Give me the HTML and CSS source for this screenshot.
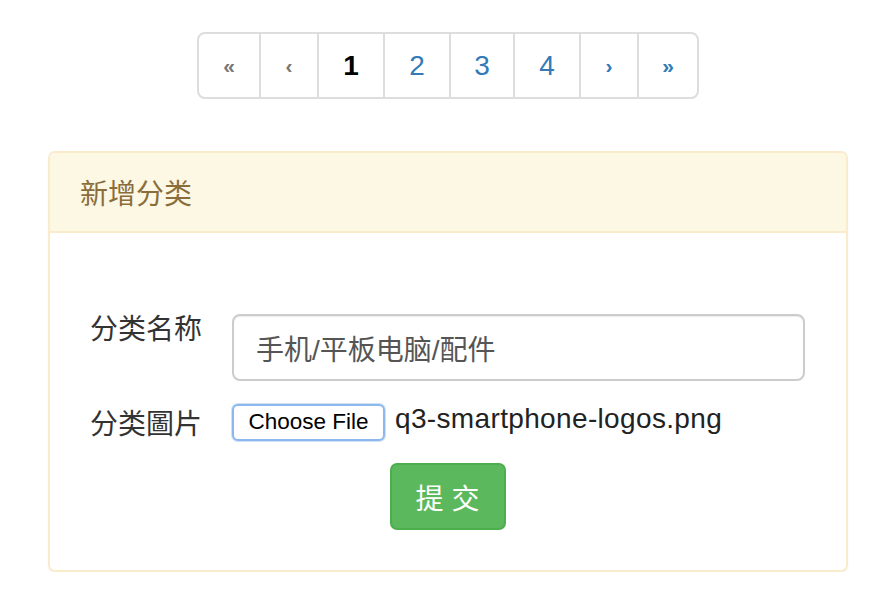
FILE: index.html
```html
<!DOCTYPE html>
<html lang="zh">
<head>
<meta charset="utf-8">
<title>新增分类</title>
<link rel="stylesheet" href="styles.css">
</head>
<body>
<nav class="pager-wrap">
  <ul class="pagination">
    <li class="pg w59 muted chev">&laquo;</li>
    <li class="pg w56 muted chev">&lsaquo;</li>
    <li class="pg w64 active">1</li>
    <li class="pg w64">2</li>
    <li class="pg w62">3</li>
    <li class="pg w64">4</li>
    <li class="pg w56 chev">&rsaquo;</li>
    <li class="pg w59 chev">&raquo;</li>
  </ul>
</nav>
<section class="panel">
  <div class="panel-heading">新增分类</div>
  <div class="panel-body">
    <div class="form-row row-name">
      <span class="label">分类名称</span>
      <div class="input">手机/平板电脑/配件</div>
    </div>
    <div class="form-row row-file">
      <span class="label label-file">分类圖片</span>
      <div class="file">
        <span class="file-btn">Choose File</span>
        <span class="file-name">q3-smartphone-logos.png</span>
      </div>
    </div>
    <div class="submit-row">
      <button class="btn-submit" type="button">提 交</button>
    </div>
  </div>
</section>
</body>
</html>
```

FILE: styles.css
```css
* { box-sizing: border-box; }
html, body { margin: 0; padding: 0; background: #fff; }
body {
  font-family: "Liberation Sans", "Noto Sans CJK SC", sans-serif;
  font-size: 28px;
  color: #333;
}
.pager-wrap {
  display: flex;
  justify-content: center;
  padding-top: 32px;
  padding-left: 4px;
}
.pagination {
  display: flex;
  margin: 0;
  padding: 0;
  list-style: none;
  border: 2px solid #ddd;
  border-radius: 8px;
  height: 67px;
}
.pg {
  display: flex;
  align-items: center;
  justify-content: center;
  color: #337ab7;
  font-size: 28px;
  line-height: 1;
  border-left: 2px solid #ddd;
}
.pg:first-child { border-left: none; }
.pg.chev { font-size: 21px; font-weight: bold; padding-bottom: 1px; }
.pg.muted { color: #777; }
.pg.active { color: #000; font-weight: bold; }
.w56 { width: 58px; }
.w59 { width: 60px; }
.w62 { width: 64px; }
.w64 { width: 66px; }

.panel {
  margin: 52px 0 0 48px;
  width: 800px;
  border: 2px solid #faebcc;
  border-radius: 7px;
  box-shadow: 0 1px 2px rgba(0,0,0,0.05);
  overflow: hidden;
}
.panel-heading {
  height: 80px;
  display: flex;
  align-items: center;
  padding-left: 30px;
  background: #fcf8e3;
  border-bottom: 2px solid #faebcc;
  color: #8a6d3b;
  font-size: 28px;
}
.panel-body {
  padding: 81px 41px 40px 40px;
}
.form-row {
  display: grid;
  grid-template-columns: 142px 1fr;
}
.row-name { align-items: start; }
.row-file { align-items: center; margin-top: 22px; }
.label {
  font-size: 28px;
  line-height: 32px;
  color: #333;
}
.label-file { padding-top: 6px; }
.input {
  height: 67px;
  border: 2px solid #ccc;
  border-radius: 8px;
  padding: 0 22px;
  display: flex;
  align-items: center;
  color: #555;
  font-size: 28px;
  box-shadow: inset 0 1px 1px rgba(0,0,0,0.075);
}
.file {
  display: flex;
  align-items: center;
  height: 37px;
}
.file-btn {
  display: flex;
  align-items: center;
  justify-content: center;
  width: 153px;
  height: 37px;
  border: 2px solid #8db8ee;
  border-radius: 6px;
  background: #fff;
  color: #000;
  font-size: 22.5px;
  box-shadow: 0 0 0 1px #cfe0f7;
}
.file-name {
  margin-left: 10px;
  color: #222;
  font-size: 28px;
  letter-spacing: 0.35px;
  line-height: 1;
  margin-top: -6px;
}
.submit-row {
  display: flex;
  justify-content: center;
  margin-top: 22px;
}
.btn-submit {
  width: 116px;
  height: 67px;
  border: 2px solid #4cae4c;
  border-radius: 7px;
  background: #5cb85c;
  color: #fff;
  font-family: "Liberation Sans", "Noto Sans CJK SC", sans-serif;
  font-size: 28px;
  padding: 0;
}
```
